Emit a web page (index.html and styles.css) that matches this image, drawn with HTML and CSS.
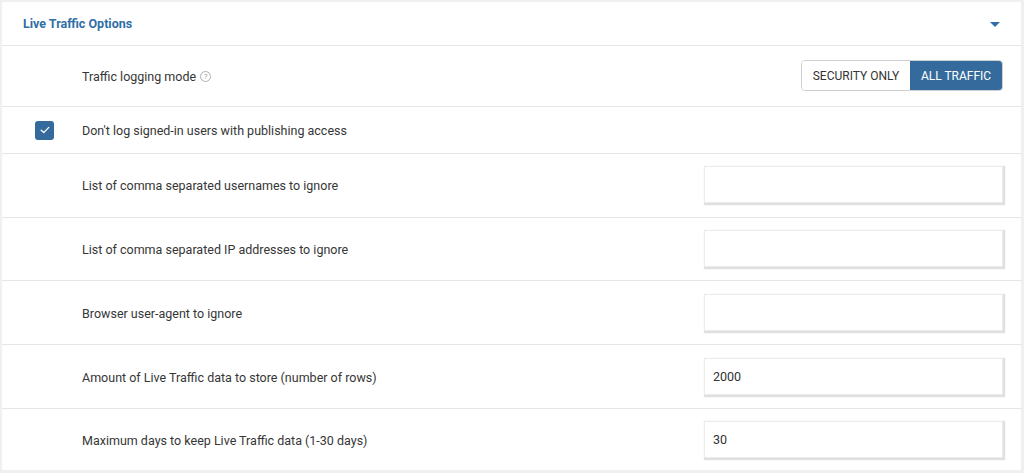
FILE: index.html
```html
<!DOCTYPE html>
<html>
<head>
<meta charset="utf-8">
<link rel="stylesheet" href="styles.css">
</head>
<body>
<div class="panel">
  <div class="header">
    <span class="title">Live Traffic Options</span>
    <span class="caret"></span>
  </div>
  <div class="row row-toggle">
    <div class="lead"></div>
    <div class="label">Traffic logging mode <span class="help">?</span></div>
    <div class="control">
      <div class="seg">
        <span class="seg-btn">SECURITY ONLY</span>
        <span class="seg-btn active">ALL TRAFFIC</span>
      </div>
    </div>
  </div>
  <div class="row row-check">
    <div class="lead"><span class="checkbox"><svg width="10" height="8" viewBox="0 0 10 8"><path d="M1.2 4.2 L3.8 6.6 L8.8 1.4" fill="none" stroke="#fff" stroke-width="1.3" stroke-linecap="round" stroke-linejoin="round"/></svg></span></div>
    <div class="label">Don't log signed-in users with publishing access</div>
  </div>
  <div class="row row-input">
    <div class="lead"></div>
    <div class="label">List of comma separated usernames to ignore</div>
    <div class="control"><div class="input"></div></div>
  </div>
  <div class="row row-input">
    <div class="lead"></div>
    <div class="label">List of comma separated IP addresses to ignore</div>
    <div class="control"><div class="input"></div></div>
  </div>
  <div class="row row-input">
    <div class="lead"></div>
    <div class="label">Browser user-agent to ignore</div>
    <div class="control"><div class="input"></div></div>
  </div>
  <div class="row row-input">
    <div class="lead"></div>
    <div class="label">Amount of Live Traffic data to store (number of rows)</div>
    <div class="control"><div class="input">2000</div></div>
  </div>
  <div class="row row-input last">
    <div class="lead"></div>
    <div class="label">Maximum days to keep Live Traffic data (1-30 days)</div>
    <div class="control"><div class="input">30</div></div>
  </div>
</div>
</body>
</html>
```

FILE: styles.css
```css
html, body {
  margin: 0;
  padding: 0;
  background: #f0f0f1;
  height: 473px;
  overflow: hidden;
}
body {
  font-family: Roboto, "Liberation Sans", Arial, sans-serif;
  font-size: 12.5px;
  color: #363636;
}
.panel {
  margin: 2px 3px 0 2px;
  background: #fff;
  height: 468px;
  display: flex;
  flex-direction: column;
}
.header {
  height: 43px;
  display: flex;
  align-items: center;
  justify-content: space-between;
  padding: 0 21px 0 21px;
  border-bottom: 1px solid #e6e6e6;
}
.title {
  font-weight: 700;
  color: #2f6ea6;
  font-size: 12.5px;
}
.caret {
  width: 0;
  height: 0;
  border-left: 5px solid transparent;
  border-right: 5px solid transparent;
  border-top: 5px solid #2f6ea6;
  margin-top: 3px;
}
.row {
  display: flex;
  align-items: center;
  border-bottom: 1px solid #e6e6e6;
  padding-right: 18px;
}
.row-toggle { height: 60px; }
.row-check { height: 46px; }
.row-input { height: 63px; }
.row.last { border-bottom: none; height: 61px; }
.lead {
  width: 80px;
  flex: none;
  display: flex;
  align-items: center;
}
.label {
  flex: 1;
  display: flex;
  align-items: center;
  gap: 4px;
  padding-top: 1px;
}
.control {
  flex: none;
  display: flex;
  justify-content: flex-end;
}
.help {
  display: inline-flex;
  width: 9px;
  height: 9px;
  border: 1px solid #b0b0b0;
  border-radius: 50%;
  color: #a0a0a0;
  font-size: 7.5px;
  line-height: 9px;
  align-items: center;
  justify-content: center;
  margin-top: 1px;
}
.seg {
  display: flex;
  height: 31px;
  border-radius: 4px;
  overflow: hidden;
  border: 1px solid #cfcfcf;
  box-sizing: border-box;
}
.seg-btn {
  display: flex;
  align-items: center;
  font-size: 12px;
  color: #333;
  padding: 0 10px 0 10px;
  width: 88px;
  justify-content: center;
  background: #fff;
}
.seg-btn.active {
  background: #346b9c;
  color: #fff;
  width: 72px;
}
.checkbox {
  margin-left: 33px;
  width: 19px;
  height: 19px;
  border-radius: 3px;
  background: #346b9c;
  display: flex;
  align-items: center;
  justify-content: center;
  margin-top: 1px;
}
.input {
  width: 299px;
  height: 37px;
  box-sizing: border-box;
  border: 1px solid #ececec;
  box-shadow: 1px 1px 1px 1px rgba(210, 210, 210, 0.7);
  background: #fff;
  display: flex;
  align-items: center;
  padding-left: 8px;
  color: #333;
  font-size: 12.5px;
  margin-top: -1px;
}
```
